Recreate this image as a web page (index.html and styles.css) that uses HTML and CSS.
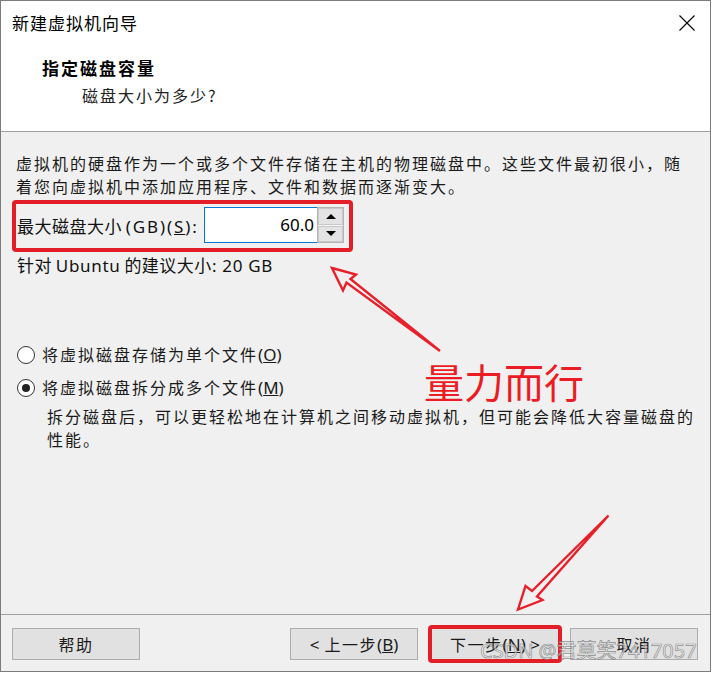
FILE: index.html
```html
<!DOCTYPE html>
<html lang="zh-CN">
<head>
<meta charset="utf-8">
<title>新建虚拟机向导</title>
<link rel="stylesheet" href="styles.css">
</head>
<body>
<div class="window">
  <div class="header">
    <div class="titlebar">
      <span class="title">新建虚拟机向导</span>
      <svg class="close" width="16" height="16" viewBox="0 0 16 16"><path d="M0.5 0.5 L15.5 15.5 M15.5 0.5 L0.5 15.5" stroke="#000" stroke-width="1.1" fill="none"/></svg>
    </div>
    <div class="heading">指定磁盘容量</div>
    <div class="subheading">磁盘大小为多少?</div>
  </div>

  <div class="content">
    <p class="intro">虚拟机的硬盘作为一个或多个文件存储在主机的物理磁盘中。这些文件最初很小，随<br>着您向虚拟机中添加应用程序、文件和数据而逐渐变大。</p>

    <div class="size-row">
      <label class="size-label"><span class="cjk-s">最大磁盘大小</span> <span class="lat">(GB)(<u>S</u>):</span></label>
      <div class="spin">
        <div class="spin-input">60.0</div>
        <div class="spin-btns">
          <div class="spin-btn"><span class="tri-up"></span></div>
          <div class="spin-btn"><span class="tri-down"></span></div>
        </div>
      </div>
    </div>

    <div class="recommend"><span class="cjk-s">针对</span> <span class="lat">Ubuntu</span> <span class="cjk-s">的建议大小</span><span class="lat">: 20 GB</span></div>

    <div class="radios">
      <div class="radio-row">
        <span class="radio"></span>
        <span class="radio-text">将虚拟磁盘存储为单个文件<span class="lat">(<u>O</u>)</span></span>
      </div>
      <div class="radio-row">
        <span class="radio checked"></span>
        <span class="radio-text">将虚拟磁盘拆分成多个文件<span class="lat">(<u>M</u>)</span></span>
      </div>
      <p class="desc">拆分磁盘后，可以更轻松地在计算机之间移动虚拟机，但可能会降低大容量磁盘的<br>性能。</p>
    </div>
  </div>

  <div class="footer">
    <button class="btn">帮助</button>
    <div class="spacer"></div>
    <button class="btn"><span class="lat">&lt;</span> 上一步<span class="lat">(<u>B</u>)</span></button>
    <button class="btn btn-next">下一步<span class="lat">(<u>N</u>) &gt;</span></button>
    <button class="btn">取消</button>
  </div>
</div>

<svg class="annot" width="712" height="673" viewBox="0 0 712 673">
  <polygon points="332,268 356,274.5 350.5,279 440,351 346.5,282.5 343,290.5" fill="none" stroke="#e8202a" stroke-width="2.4" stroke-linejoin="miter"/>
  <polygon points="518,609.5 525.5,586 532,591 608.5,515.5 537,596.5 542.5,600" fill="none" stroke="#e8202a" stroke-width="2.4" stroke-linejoin="miter"/>
</svg>
<div class="annot-text">量力而行</div>
<div class="watermark">CSDN @君莫笑7417057</div>
</body>
</html>
```

FILE: styles.css
```css
html, body {
  margin: 0;
  padding: 0;
  background: #ffffff;
}

body {
  position: relative;
  width: 712px;
  height: 673px;
  font-family: "Noto Sans CJK SC", sans-serif;
  color: #111;
}

.window {
  width: 711px;
  height: 672px;
  box-sizing: border-box;
  border: 1px solid #7c7c7c;
  background: #f0f0f0;
  display: flex;
  flex-direction: column;
}

.header {
  background: #ffffff;
  height: 130px;
  border-bottom: 1px solid #a0a0a0;
  flex: none;
}

.titlebar {
  height: 44px;
  display: flex;
  align-items: center;
  justify-content: space-between;
  padding: 0 15px 0 11px;
}

.title {
  font-size: 17px;
  letter-spacing: 1px;
  line-height: 24px;
  color: #000;
}

.close {
  display: block;
}

.heading {
  margin-top: 11px;
  padding-left: 41px;
  font-size: 17px;
  font-weight: 700;
  letter-spacing: 2px;
  line-height: 24px;
  color: #000;
}

.subheading {
  margin-top: 3px;
  padding-left: 81px;
  font-size: 16px;
  letter-spacing: 2px;
  line-height: 24px;
  color: #222;
}

.content {
  flex: 1;
  padding: 20px 10px 0 15px;
}

.intro {
  margin: 0;
  font-size: 16px;
  letter-spacing: 2px;
  line-height: 23px;
  color: #1a1a1a;
  white-space: nowrap;
}

.lat {
  font-family: "Noto Sans", "Noto Sans CJK SC", sans-serif;
  letter-spacing: 0;
}

.cjk-s {
  letter-spacing: 0.5px;
}

.size-row {
  margin-top: 2px;
  margin-left: -4px;
  width: 341px;
  height: 52px;
  box-sizing: border-box;
  border: 4px solid #e41e26;
  border-radius: 4px;
  display: flex;
  align-items: center;
  padding: 0 5px 0 1px;
}

.size-label {
  width: 187px;
  flex: none;
  font-size: 17px;
  line-height: 24px;
  color: #111;
}

.size-label .lat {
  letter-spacing: 1.9px;
}

.spin {
  display: flex;
  height: 36px;
  margin-top: -2px;
}

.spin-input {
  width: 109px;
  height: 34px;
  border: 1px solid #0078d7;
  border-right: none;
  background: #fff;
  font-family: "Noto Sans", sans-serif;
  font-size: 17px;
  line-height: 34px;
  text-align: right;
  padding-right: 3px;
  color: #000;
}

.spin-btns {
  width: 25px;
  height: 34px;
  border: 1px solid #b4b4b4;
  background: #f5f5f5;
  display: flex;
  flex-direction: column;
  gap: 1px;
}

.spin-btn {
  flex: 1;
  background: #e3e3e3;
  border: 1px solid #c8c8c8;
  display: flex;
  align-items: center;
  justify-content: center;
}

.tri-up {
  width: 0;
  height: 0;
  border-left: 5px solid transparent;
  border-right: 5px solid transparent;
  border-bottom: 5px solid #000;
}

.tri-down {
  width: 0;
  height: 0;
  border-left: 5px solid transparent;
  border-right: 5px solid transparent;
  border-top: 5px solid #000;
}

.recommend {
  margin-top: 3px;
  padding-left: 1px;
  font-size: 17px;
  line-height: 20px;
  color: #111;
}

.recommend .lat {
  letter-spacing: 0.7px;
}

.radios {
  margin-top: 66px;
  display: flex;
  flex-direction: column;
  gap: 8px;
}

.radio-row {
  display: flex;
  align-items: center;
  gap: 7px;
  height: 25px;
  padding-left: 1px;
}

.radio {
  width: 16px;
  height: 16px;
  border: 1px solid #333;
  border-radius: 50%;
  background: #fff;
  display: flex;
  align-items: center;
  justify-content: center;
  flex: none;
}

.radio.checked::after {
  content: "";
  width: 8px;
  height: 8px;
  border-radius: 50%;
  background: #222;
}

.radio-text {
  font-size: 16px;
  letter-spacing: 2px;
  line-height: 24px;
  color: #1a1a1a;
}

.radio-text .lat {
  font-size: 17px;
}

.desc {
  margin: -3px 0 0 31px;
  font-size: 16px;
  letter-spacing: 2px;
  line-height: 23px;
  color: #1a1a1a;
  white-space: nowrap;
}

.footer {
  flex: none;
  border-top: 1px solid #a0a0a0;
  padding: 13px 12px 11px 11px;
  display: flex;
  align-items: center;
}

.spacer {
  flex: 1;
}

.btn {
  width: 128px;
  height: 32px;
  box-sizing: border-box;
  border: 1px solid #adadad;
  background: #e1e1e1;
  font-family: "Noto Sans CJK SC", sans-serif;
  font-size: 16px;
  letter-spacing: 1.5px;
  color: #1a1a1a;
  padding: 0;
  margin: 0;
  line-height: 28px;
}

.btn .lat {
  font-size: 17px;
}

.btn + .btn {
  margin-left: 13px;
}

.btn-next {
  margin-left: 13px;
  outline: 4px solid #e41e26;
  outline-offset: -1px;
  border-radius: 1px;
}

.btn-next + .btn {
  margin-left: 11px;
}

.annot {
  position: absolute;
  top: 0;
  left: 0;
  pointer-events: none;
}

.annot-text {
  position: absolute;
  left: 424px;
  top: 357px;
  font-family: "Noto Sans CJK SC", sans-serif;
  font-size: 40px;
  line-height: 48px;
  color: #ec1c24;
  white-space: nowrap;
}

.watermark {
  position: absolute;
  left: 480px;
  top: 638px;
  font-family: "Noto Sans", "Noto Sans CJK SC", sans-serif;
  font-size: 20px;
  line-height: 26px;
  color: rgba(255, 255, 255, 0.55);
  -webkit-text-stroke: 0.7px rgba(110, 110, 110, 0.75);
  white-space: nowrap;
}
```
